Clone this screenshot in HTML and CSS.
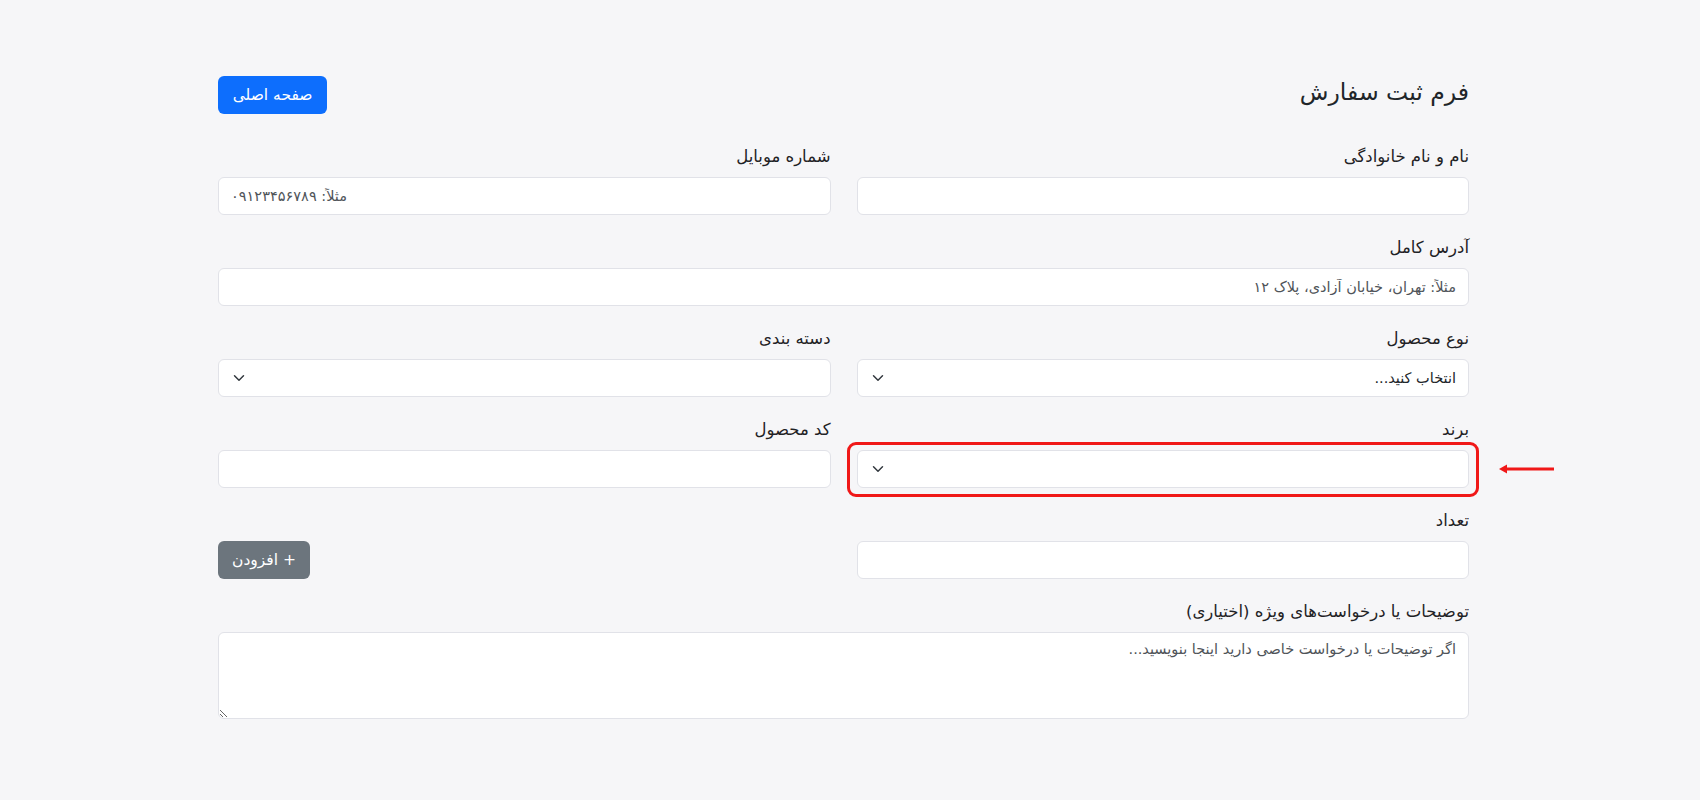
FILE: index.html
```html
<!DOCTYPE html>
<html lang="fa" dir="rtl">
<head>
    <meta charset="UTF-8">
    <meta name="viewport" content="width=device-width, initial-scale=1.0">
    <title>فرم ثبت سفارش</title>
    <link rel="stylesheet" href="styles.css">
</head>
<body>
    <div class="page">
        <div class="page-head">
            <h1 class="page-title">فرم ثبت سفارش</h1>
            <a class="btn btn-primary" href="#">صفحه اصلی</a>
        </div>

        <form class="order-form">
            <div class="field">
                <label for="fullname">نام و نام خانوادگی</label>
                <input class="control" id="fullname" type="text">
            </div>
            <div class="field">
                <label for="mobile">شماره موبایل</label>
                <input class="control control-left" id="mobile" type="text" placeholder="مثلاً: ۰۹۱۲۳۴۵۶۷۸۹">
            </div>
            <div class="field full">
                <label for="address">آدرس کامل</label>
                <input class="control" id="address" type="text" placeholder="مثلاً: تهران، خیابان آزادی، پلاک ۱۲">
            </div>
            <div class="field">
                <label for="product-type">نوع محصول</label>
                <select class="control select" id="product-type">
                    <option>انتخاب کنید...</option>
                </select>
            </div>
            <div class="field">
                <label for="category">دسته بندی</label>
                <select class="control select" id="category">
                    <option></option>
                </select>
            </div>
            <div class="field">
                <label for="brand">برند</label>
                <div class="marked">
                    <select class="control select" id="brand">
                        <option></option>
                    </select>
                    <span class="mark-box"></span>
                    <svg class="mark-arrow" width="58" height="14" viewBox="0 0 58 14">
                        <line x1="6" y1="7" x2="56" y2="7" stroke="#f01818" stroke-width="3"/>
                        <path d="M1 7 L9 2.5 L9 11.5 Z" fill="#f01818"/>
                    </svg>
                </div>
            </div>
            <div class="field">
                <label for="code">کد محصول</label>
                <input class="control" id="code" type="text">
            </div>
            <div class="field">
                <label for="qty">تعداد</label>
                <input class="control" id="qty" type="text">
            </div>
            <div class="field field-action">
                <button class="btn btn-secondary" type="button">+ افزودن</button>
            </div>
            <div class="field full">
                <label for="notes">توضیحات یا درخواست‌های ویژه (اختیاری)</label>
                <textarea class="control notes" id="notes" placeholder="اگر توضیحات یا درخواست خاصی دارید اینجا بنویسید..."></textarea>
            </div>
        </form>
    </div>
</body>
</html>
```

FILE: styles.css
```css
body {
    margin: 0;
    padding: 0 13px 0 0;
    font-family: "DejaVu Sans", "Noto Sans", sans-serif;
    background-color: #f6f6f8;
    color: #212529;
}
.page {
    max-width: 1251px;
    margin: 0 auto;
    padding-top: 76px;
}
.page-head {
    display: flex;
    justify-content: space-between;
    align-items: center;
    margin-bottom: 31px;
}
.page-title {
    margin: 0;
    font-size: 23.5px;
    font-weight: 400;
    line-height: 1.2;
    padding-bottom: 5px;
}
.btn {
    display: inline-flex;
    align-items: center;
    justify-content: center;
    height: 38px;
    padding: 0 12px;
    border: none;
    border-radius: 6px;
    font-family: inherit;
    font-size: 15.5px;
    color: #fff;
    text-decoration: none;
    cursor: pointer;
    box-sizing: border-box;
}
.btn-primary {
    width: 109px;
    background-color: #0d6efd;
}
.btn-secondary {
    width: 92px;
    background-color: #6c757d;
}
.order-form {
    display: grid;
    grid-template-columns: 1fr 1fr;
    column-gap: 26px;
}
.field {
    display: flex;
    flex-direction: column;
    padding-bottom: 21px;
}
.field.full {
    grid-column: 1 / -1;
}
.field label {
    font-size: 16.5px;
    line-height: 24px;
    margin-bottom: 8px;
    color: #1f2225;
}
.field-action {
    justify-content: flex-end;
    align-items: flex-end;
}
.control {
    box-sizing: border-box;
    width: 100%;
    height: 38px;
    padding: 6px 12px;
    background-color: #fff;
    border: 1px solid #e1e2e8;
    border-radius: 6px;
    font-family: inherit;
    font-size: 14.5px;
    color: #212529;
}
.control::placeholder {
    color: #4f5459;
}
.control-left {
    text-align: left;
}
.select {
    appearance: none;
    -webkit-appearance: none;
    padding-left: 36px;
    background-image: url("data:image/svg+xml,%3csvg xmlns='http://www.w3.org/2000/svg' viewBox='0 0 16 16'%3e%3cpath fill='none' stroke='%23343a40' stroke-linecap='round' stroke-linejoin='round' stroke-width='2' d='m2 5 6 6 6-6'/%3e%3c/svg%3e");
    background-repeat: no-repeat;
    background-position: left 12px center;
    background-size: 16px 12px;
}
.notes {
    height: 87px;
    resize: vertical;
    padding-top: 8px;
}
.marked {
    position: relative;
}
.mark-box {
    position: absolute;
    top: -8px;
    bottom: -9px;
    left: -10px;
    right: -10px;
    border: 3px solid #f01818;
    border-radius: 9px;
    pointer-events: none;
}
.mark-arrow {
    position: absolute;
    left: calc(100% + 29px);
    top: 50%;
    margin-top: -7px;
}
```
